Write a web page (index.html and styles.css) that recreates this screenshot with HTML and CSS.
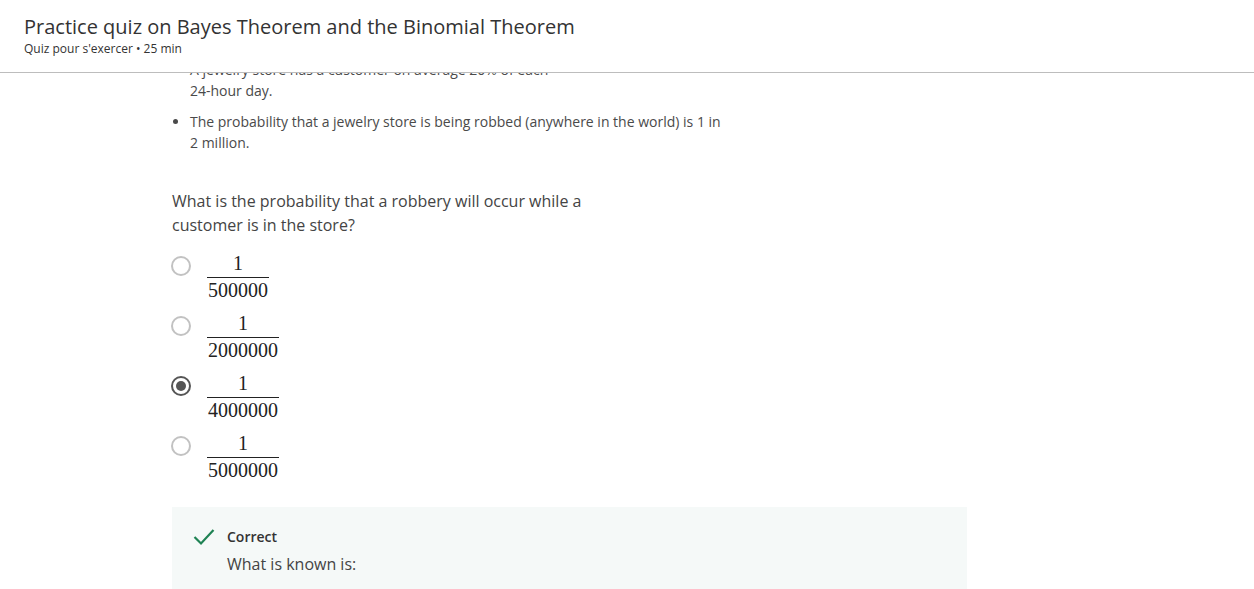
FILE: index.html
```html
<!DOCTYPE html>
<html lang="en">
<head>
<meta charset="utf-8">
<title>Practice quiz on Bayes Theorem and the Binomial Theorem</title>
<link rel="stylesheet" href="styles.css">
</head>
<body>
<header class="quiz-header">
  <h1 class="quiz-title">Practice quiz on Bayes Theorem and the Binomial Theorem</h1>
  <div class="quiz-meta">Quiz pour s'exercer • 25 min</div>
</header>
<main class="quiz-body">
  <div class="quiz-column">
    <ul class="facts">
      <li class="fact fact-clipped">A jewelry store has a customer on average 20% of each<br>24-hour day.</li>
      <li class="fact">The probability that a jewelry store is being robbed (anywhere in the world) is 1 in 2 million.</li>
    </ul>
    <p class="question">What is the probability that a robbery will occur while a customer is in the store?</p>
    <div class="options">
      <div class="option">
        <span class="radio"></span>
        <span class="frac"><span class="num">1</span><span class="den">500000</span></span>
      </div>
      <div class="option">
        <span class="radio"></span>
        <span class="frac"><span class="num">1</span><span class="den">2000000</span></span>
      </div>
      <div class="option">
        <span class="radio radio-checked"></span>
        <span class="frac"><span class="num">1</span><span class="den">4000000</span></span>
      </div>
      <div class="option">
        <span class="radio"></span>
        <span class="frac"><span class="num">1</span><span class="den">5000000</span></span>
      </div>
    </div>
    <section class="feedback">
      <svg class="check" width="22" height="18" viewBox="0 0 22 18" aria-hidden="true">
        <polyline points="1.5,9 8,15.5 20.5,2" fill="none" stroke="#1f8354" stroke-width="2.2"/>
      </svg>
      <div class="feedback-text">
        <div class="feedback-title">Correct</div>
        <div class="feedback-body">What is known is:</div>
      </div>
    </section>
  </div>
</main>
</body>
</html>
```
FILE: styles.css
```css
html, body {
  margin: 0;
  padding: 0;
  background: #ffffff;
}
body {
  width: 1254px;
  height: 589px;
  overflow: hidden;
  font-family: "Open Sans", "Liberation Sans", sans-serif;
  color: #444444;
  display: flex;
  flex-direction: column;
}
.quiz-header {
  height: 73px;
  box-sizing: border-box;
  padding: 13px 24px 0;
  border-bottom: 1px solid #bdbdbd;
  background: #ffffff;
  flex: none;
}
.quiz-title {
  margin: 0;
  font-size: 20px;
  line-height: 28px;
  font-weight: 400;
  color: #333333;
}
.quiz-meta {
  margin-top: 0;
  font-size: 12px;
  line-height: 16px;
  color: #333333;
}
.quiz-body {
  flex: 1;
  overflow: hidden;
}
.quiz-column {
  margin-left: 172px;
  width: 795px;
}
.facts {
  margin: -14px 0 0;
  padding-left: 18px;
  width: 540px;
  font-size: 14px;
  line-height: 21px;
  color: #4a4a4a;
}
.fact + .fact {
  margin-top: 10px;
}
.question {
  margin: 36px 0 0;
  width: 440px;
  font-size: 16px;
  line-height: 24px;
  color: #444444;
}
.options {
  margin-top: 16px;
  display: flex;
  flex-direction: column;
  gap: 12px;
}
.option {
  display: flex;
  align-items: flex-start;
  gap: 16px;
  height: 48px;
}
.radio {
  flex: none;
  margin-top: 3px;
  margin-left: -1px;
  width: 20px;
  height: 20px;
  box-sizing: border-box;
  border: 2px solid #c2c2c2;
  border-radius: 50%;
  background: #fff;
  display: flex;
  align-items: center;
  justify-content: center;
}
.radio-checked {
  border: 2px solid #555555;
}
.radio-checked::after {
  content: "";
  width: 10px;
  height: 10px;
  border-radius: 50%;
  background: #555555;
}
.frac {
  display: inline-flex;
  flex-direction: column;
  align-items: stretch;
  font-family: "Liberation Serif", "DejaVu Serif", serif;
  font-size: 20px;
  line-height: 20px;
  color: #222222;
  text-align: center;
}
.num {
  padding: 0 1px 4px;
  border-bottom: 1px solid #222222;
}
.den {
  padding: 2px 1px 0;
}
.feedback {
  margin-top: 26px;
  background: #f5f9f8;
  display: flex;
  align-items: flex-start;
  gap: 12px;
  padding: 20px 21px 20px;
  min-height: 100px;
  box-sizing: border-box;
}
.check {
  flex: none;
  margin-top: 1px;
}
.feedback-title {
  font-size: 14px;
  line-height: 20px;
  font-weight: 600;
  color: #333333;
}
.feedback-body {
  margin-top: 5px;
  font-size: 16px;
  line-height: 24px;
  color: #444444;
}
```
